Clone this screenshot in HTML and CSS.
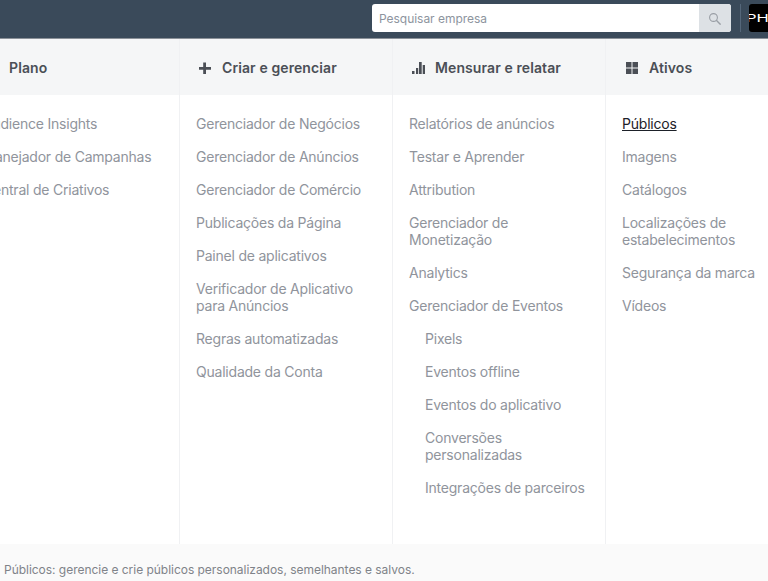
FILE: index.html
```html
<!DOCTYPE html>
<html lang="pt">
<head>
<meta charset="utf-8">
<title>Públicos</title>
<link rel="stylesheet" href="styles.css">
</head>
<body>
<div class="page">
  <header class="topbar">
    <form class="search">
      <span class="search-text">Pesquisar empresa</span>
      <span class="search-btn">
        <svg class="search-icon" width="12" height="12" viewBox="0 0 12 12" fill="none" stroke="#9a9fa6" stroke-width="1.100"><circle cx="4.500" cy="4.500" r="3.900"/><path d="M7.300 7.300L11.600 11.600" stroke-width="1.400"/></svg>
      </span>
    </form>
    <span class="divider"></span>
    <span class="logo"><span class="logo-text">PHI</span></span>
  </header>
  <main class="menu">
    <section class="col col-first">
      <h2 class="col-head"><span class="head-label">Plano</span></h2>
      <ul class="list">
        <li class="item">Audience Insights</li>
        <li class="item">Planejador de Campanhas</li>
        <li class="item">Central de Criativos</li>
      </ul>
    </section>
    <section class="col">
      <h2 class="col-head">
        <svg class="icon" width="14" height="14" viewBox="0 0 14 14"><path d="M5.200 2.500h2.800v4.500h5v2.700h-5V14H5.200V9.700H1V7h4.200z" fill="#4b4f56"/></svg>
        <span class="head-label">Criar e gerenciar</span>
      </h2>
      <ul class="list">
        <li class="item">Gerenciador de Negócios</li>
        <li class="item">Gerenciador de Anúncios</li>
        <li class="item">Gerenciador de Comércio</li>
        <li class="item">Publicações da Página</li>
        <li class="item">Painel de aplicativos</li>
        <li class="item">Verificador de Aplicativo para Anúncios</li>
        <li class="item">Regras automatizadas</li>
        <li class="item">Qualidade da Conta</li>
      </ul>
    </section>
    <section class="col">
      <h2 class="col-head">
        <svg class="icon" width="14" height="14" viewBox="0 0 14 14" fill="#4b4f56"><rect x="1" y="11" width="2.500" height="3"/><rect x="5" y="8" width="2.200" height="6"/><rect x="8" y="2" width="2.700" height="12"/><rect x="11.700" y="5" width="2.300" height="9"/></svg>
        <span class="head-label">Mensurar e relatar</span>
      </h2>
      <ul class="list">
        <li class="item">Relatórios de anúncios</li>
        <li class="item">Testar e Aprender</li>
        <li class="item">Attribution</li>
        <li class="item">Gerenciador de Monetização</li>
        <li class="item">Analytics</li>
        <li class="item">Gerenciador de Eventos</li>
        <li class="item sub">Pixels</li>
        <li class="item sub">Eventos offline</li>
        <li class="item sub">Eventos do aplicativo</li>
        <li class="item sub">Conversões personalizadas</li>
        <li class="item sub">Integrações de parceiros</li>
      </ul>
    </section>
    <section class="col col-last">
      <h2 class="col-head">
        <svg class="icon" width="14" height="14" viewBox="0 0 14 14" fill="#4b4f56"><rect x="2" y="2" width="5.500" height="5.500"/><rect x="8.500" y="2" width="5.500" height="5.500"/><rect x="2" y="8.500" width="5.500" height="5.500"/><rect x="8.500" y="8.500" width="5.500" height="5.500"/></svg>
        <span class="head-label">Ativos</span>
      </h2>
      <ul class="list">
        <li class="item active">Públicos</li>
        <li class="item">Imagens</li>
        <li class="item">Catálogos</li>
        <li class="item">Localizações de estabelecimentos</li>
        <li class="item">Segurança da marca</li>
        <li class="item">Vídeos</li>
      </ul>
    </section>
  </main>
  <footer class="status">Públicos: gerencie e crie públicos personalizados, semelhantes e salvos.</footer>
</div>
</body>
</html>
```
FILE: styles.css
```css
* { box-sizing: border-box; }
html, body { margin: 0; height: 100%; overflow: hidden; }
body { font-family: Inter, "Liberation Sans", sans-serif; background: #fff; }
.page { display: flex; flex-direction: column; width: 768px; height: 581px; overflow: hidden; }
.topbar {
  flex: none; height: 39px; background: #3a4a5a; border-bottom: 1px solid #8b9198;
  display: flex; align-items: flex-start; padding: 4px 0 0 372px;
}
.search { flex: none; width: 359px; height: 28px; background: #fff; border-radius: 3px; display: flex; overflow: hidden; }
.search-text { flex: 1; font-size: 12px; line-height: 29px; padding-left: 7px; color: #8d949e; letter-spacing: -0.03px; }
.search-btn { width: 32px; background: #dde1e5; display: flex; align-items: center; justify-content: center; }
.search-icon { margin-top: 2px; }
.divider { flex: none; width: 1px; height: 28px; background: #55677a; margin: 0 8px 0 9px; }
.logo { flex: none; width: 30px; height: 28px; background: #000; border-radius: 3px; overflow: hidden; display: flex; align-items: center; }
.logo-text { color: #fff; font-size: 11px; line-height: 28px; font-weight: 400; transform: scaleX(1.5); transform-origin: left center; margin-left: -3px; }
.menu { flex: 1; display: flex; margin-left: -33px; min-height: 0; }
.col { flex: none; width: 213px; border-right: 1px solid #f0f1f3; display: flex; flex-direction: column; }
.col:last-child { border-right: 0; }
.col-head {
  flex: none; margin: 0; height: 56px; background: #f5f6f7; display: flex; align-items: center;
  padding-left: 18px; font-size: 14px; font-weight: 600; color: #4b4f56; letter-spacing: 0.1px;
}
.col-first .col-head { padding-left: 42px; }
.icon { margin-right: 10px; flex: none; }
.col-last .icon { margin-right: 11px; }
.list { list-style: none; margin: 0; padding: 20px 16px 0; }
.item { font-size: 14px; line-height: 17px; color: #90949c; margin-bottom: 16px; letter-spacing: -0.22px; }
.sub { padding-left: 16px; }
.active { color: #1d2129; text-decoration: underline; }
.status { flex: none; height: 37px; background: #fafafa; font-size: 12px; line-height: 16px; padding: 18px 0 0 4px; color: #7f8389; letter-spacing: -0.03px; }
```
